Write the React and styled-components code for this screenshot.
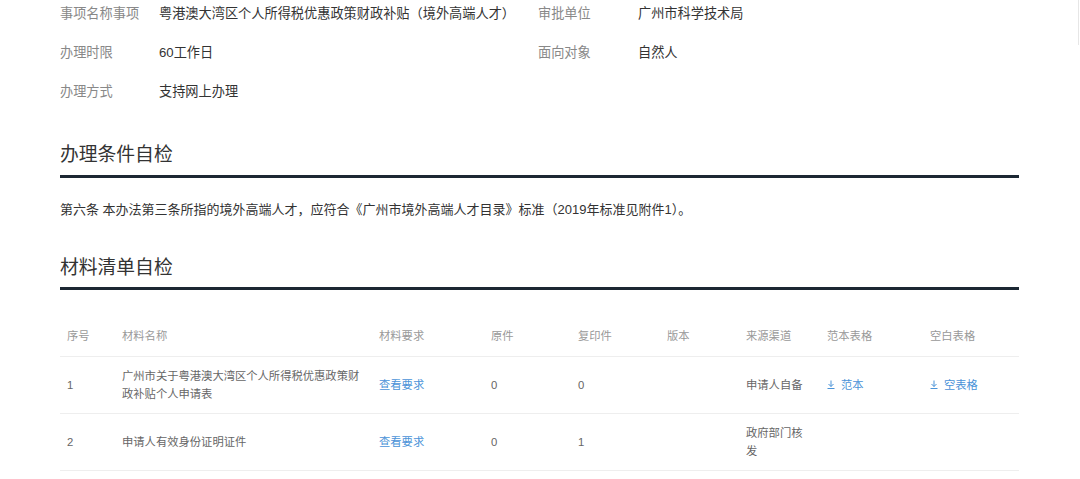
import styled, { createGlobalStyle } from "styled-components";

const GlobalStyle = createGlobalStyle`
  html, body {
    margin: 0;
    padding: 0;
    background: #fff;
  }
  body {
    font-family: "Liberation Sans", "Noto Sans CJK SC", sans-serif;
    color: #333;
  }
`;

const Page = styled.div`
  width: 959px;
  margin-left: 60px;
  overflow: hidden;
`;

const EdgeBar = styled.div`
  position: fixed;
  top: 0;
  right: 1px;
  width: 1px;
  height: 45px;
  background: #e6e6e6;
`;

const InfoGrid = styled.div`
  display: grid;
  grid-template-columns: 478px 1fr;
  row-gap: 15px;
`;

const InfoItem = styled.div`
  display: flex;
  align-items: center;
  height: 24px;
  font-size: 13.2px;
`;

const InfoLabel = styled.span`
  width: ${(p) => p.$w}px;
  flex-shrink: 0;
  color: #888;
`;

const InfoValue = styled.span`
  color: #333;
  white-space: nowrap;
`;

const SectionTitle = styled.h2`
  margin: ${(p) => p.$top}px 0 0;
  padding-bottom: ${(p) => p.$pad}px;
  font-size: 18.8px;
  line-height: 26px;
  font-weight: 400;
  color: #333;
  border-bottom: 3px solid #1c2833;
`;

const Paragraph = styled.p`
  margin: 22px 0 0;
  font-size: 13px;
  line-height: 20px;
  color: #333;
`;

const Table = styled.table`
  margin-top: 26px;
  width: 959px;
  border-collapse: collapse;
  table-layout: fixed;
  font-size: 11.3px;
`;

const Th = styled.th`
  text-align: left;
  font-weight: 400;
  color: #999;
  padding: 11px 8px 11px 7px;
  line-height: 18px;
  border-bottom: 1px solid #eee;
`;

const Td = styled.td`
  color: #666;
  padding: 10px 8px 10px 7px;
  line-height: 18px;
  vertical-align: middle;
  border-bottom: 1px solid #eee;
`;

const LinkText = styled.span`
  color: #4a93d8;
  display: inline-flex;
  align-items: center;
  gap: 6px;
`;

const DownloadIcon = () => (
  <svg width="8" height="9" viewBox="0 0 8 9" fill="none" stroke="#4a93d8" strokeWidth="1">
    <path d="M4 0.5V6.5" />
    <path d="M1.5 4L4 6.5L6.5 4" />
    <path d="M0.5 8.5H7.5" />
  </svg>
);

const columns = [
  { title: "序号", w: 55 },
  { title: "材料名称", w: 257 },
  { title: "材料要求", w: 112 },
  { title: "原件", w: 87 },
  { title: "复印件", w: 89 },
  { title: "版本", w: 79 },
  { title: "来源渠道", w: 81 },
  { title: "范本表格", w: 103 },
  { title: "空白表格", w: 96 },
];

const rows = [
  {
    no: "1",
    name: "广州市关于粤港澳大湾区个人所得税优惠政策财政补贴个人申请表",
    orig: "0",
    copy: "0",
    source: "申请人自备",
    sample: "范本",
    blank: "空表格",
  },
  {
    no: "2",
    name: "申请人有效身份证明证件",
    orig: "0",
    copy: "1",
    source: "政府部门核发",
  },
];

export default function App() {
  return (
    <>
      <GlobalStyle />
      <EdgeBar />
      <Page>
        <InfoGrid>
          <InfoItem>
            <InfoLabel $w={99}>事项名称事项</InfoLabel>
            <InfoValue>粤港澳大湾区个人所得税优惠政策财政补贴（境外高端人才）</InfoValue>
          </InfoItem>
          <InfoItem>
            <InfoLabel $w={100}>审批单位</InfoLabel>
            <InfoValue>广州市科学技术局</InfoValue>
          </InfoItem>
          <InfoItem>
            <InfoLabel $w={99}>办理时限</InfoLabel>
            <InfoValue>60工作日</InfoValue>
          </InfoItem>
          <InfoItem>
            <InfoLabel $w={100}>面向对象</InfoLabel>
            <InfoValue>自然人</InfoValue>
          </InfoItem>
          <InfoItem>
            <InfoLabel $w={99}>办理方式</InfoLabel>
            <InfoValue>支持网上办理</InfoValue>
          </InfoItem>
        </InfoGrid>

        <SectionTitle $top={40} $pad={7}>办理条件自检</SectionTitle>
        <Paragraph>
          第六条 本办法第三条所指的境外高端人才，应符合《广州市境外高端人才目录》标准（2019年标准见附件1）。
        </Paragraph>

        <SectionTitle $top={35} $pad={6}>材料清单自检</SectionTitle>
        <Table>
          <colgroup>
            {columns.map((c) => (
              <col key={c.title} style={{ width: c.w }} />
            ))}
          </colgroup>
          <thead>
            <tr>
              {columns.map((c) => (
                <Th key={c.title}>{c.title}</Th>
              ))}
            </tr>
          </thead>
          <tbody>
            {rows.map((r) => (
              <tr key={r.no}>
                <Td>{r.no}</Td>
                <Td>{r.name}</Td>
                <Td>
                  <LinkText>查看要求</LinkText>
                </Td>
                <Td>{r.orig}</Td>
                <Td>{r.copy}</Td>
                <Td></Td>
                <Td>{r.source}</Td>
                <Td>
                  {r.sample && (
                    <LinkText>
                      <DownloadIcon />
                      {r.sample}
                    </LinkText>
                  )}
                </Td>
                <Td>
                  {r.blank && (
                    <LinkText>
                      <DownloadIcon />
                      {r.blank}
                    </LinkText>
                  )}
                </Td>
              </tr>
            ))}
          </tbody>
        </Table>
      </Page>
    </>
  );
}
